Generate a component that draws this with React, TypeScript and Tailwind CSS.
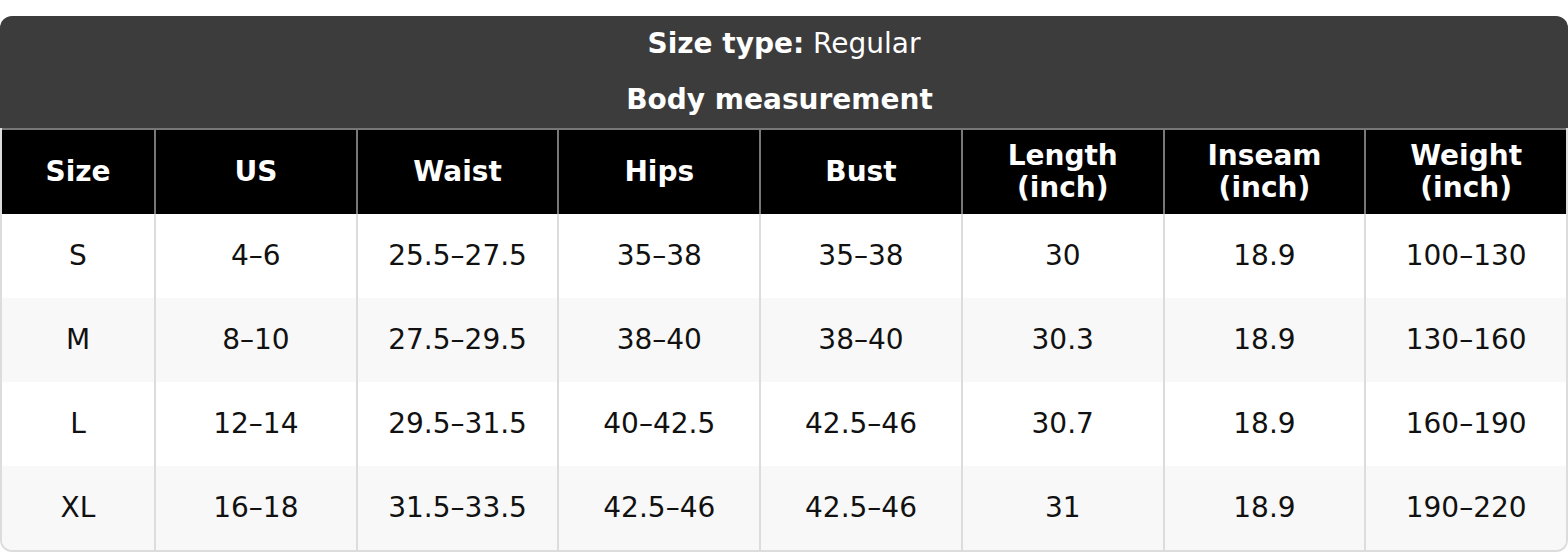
const headers = ['Size', 'US', 'Waist', 'Hips', 'Bust', 'Length (inch)', 'Inseam (inch)', 'Weight (inch)']

const rows = [
  ['S', '4–6', '25.5–27.5', '35–38', '35–38', '30', '18.9', '100–130'],
  ['M', '8–10', '27.5–29.5', '38–40', '38–40', '30.3', '18.9', '130–160'],
  ['L', '12–14', '29.5–31.5', '40–42.5', '42.5–46', '30.7', '18.9', '160–190'],
  ['XL', '16–18', '31.5–33.5', '42.5–46', '42.5–46', '31', '18.9', '190–220']
]

export default function App() {
  return (
    <div className="bg-white pt-4 w-[1568px] h-[552px] overflow-hidden font-['DejaVu_Sans',sans-serif] text-[28px]">
      <div className="rounded-t-[12px] overflow-hidden">
        <div className="bg-[#3c3c3c] text-white text-center">
          <div className="h-[56px] flex items-center justify-center">
            <span className="font-bold">Size type:</span>&nbsp;Regular
          </div>
          <div className="h-[56px] flex items-center justify-center font-bold pr-[9px]">Body measurement</div>
        </div>
      </div>
      <div className="border-x-2 border-b-2 border-[#dcdcdc] rounded-b-[12px] overflow-hidden">
        <div className="grid grid-cols-[152px_repeat(7,1fr)] bg-black text-white font-bold border-t-2 border-[#777] h-[86px] leading-[32px]">
          {headers.map((h, i) => (
            <div
              key={h}
              className={`flex items-center justify-center text-center px-2 ${i > 0 ? 'border-l-2 border-[#777]' : ''}`}
            >
              <span className="max-w-[150px]">{h}</span>
            </div>
          ))}
        </div>
        {rows.map((row, r) => (
          <div
            key={row[0]}
            className={`grid grid-cols-[152px_repeat(7,1fr)] h-[84px] text-[#111] ${r % 2 === 1 ? 'bg-[#f8f8f8]' : 'bg-white'}`}
          >
            {row.map((cell, i) => (
              <div
                key={i}
                className={`flex items-center justify-center ${i > 0 ? 'border-l-2 border-[#dcdcdc]' : ''}`}
              >
                {cell}
              </div>
            ))}
          </div>
        ))}
      </div>
    </div>
  )
}
